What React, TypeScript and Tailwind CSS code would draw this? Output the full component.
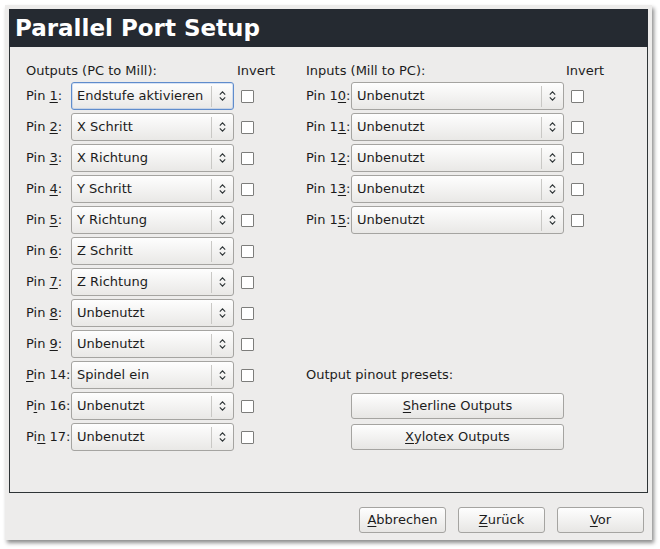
import React from "react";

// ── Parallel Port Setup (GTK-style wizard page) ──

const font = { fontFamily: '"DejaVu Sans", "Liberation Sans", sans-serif' };

function Mnemonic({ text, idx }: { text: string; idx: number }) {
  return (
    <>
      {text.slice(0, idx)}
      <span className="underline underline-offset-2 decoration-1">{text[idx]}</span>
      {text.slice(idx + 1)}
    </>
  );
}

function Arrows() {
  return (
    <svg width="7" height="12" viewBox="0 0 7 12" fill="none" stroke="#2e3436" strokeWidth="1.1">
      <polyline points="0.8,4.6 3.5,1.8 6.2,4.6" />
      <polyline points="0.8,7.4 3.5,10.2 6.2,7.4" />
    </svg>
  );
}

function Combo({ value, width, focused }: { value: string; width: string; focused?: boolean }) {
  return (
    <div
      className={`${width} h-[28px] flex items-center rounded-[3px] border bg-gradient-to-b from-[#fefefe] to-[#e9e8e6] flex-shrink-0 ${
        focused ? "border-[#5f8ccc] shadow-[inset_0_0_0_1px_rgba(140,175,225,0.35)]" : "border-[#a5a4a1]"
      }`}
    >
      <span className="flex-1 pl-[5px] text-[13px] text-[#1c1c1c] truncate">{value}</span>
      <div className="w-px h-[21px] bg-[#c9c8c5]" />
      <div className="w-[21px] flex items-center justify-center">
        <Arrows />
      </div>
    </div>
  );
}

function Check() {
  return <div className="w-[13px] h-[13px] border border-[#7d7d7b] bg-white rounded-[1px] flex-shrink-0" />;
}

function PinRow({
  label,
  idx,
  value,
  width,
  focused,
}: {
  label: string;
  idx: number;
  value: string;
  width: string;
  focused?: boolean;
}) {
  return (
    <div className="h-[28px] flex items-center">
      <span className="w-[45px] text-[13px] text-[#1c1c1c] whitespace-nowrap">
        <Mnemonic text={label} idx={idx} />
      </span>
      <Combo value={value} width={width} focused={focused} />
      <div className="ml-[7px]">
        <Check />
      </div>
    </div>
  );
}

function Button({ text, idx, width }: { text: string; idx: number; width: string }) {
  return (
    <div
      className={`${width} h-[26px] flex items-center justify-center rounded-[3px] border border-[#a5a4a1] bg-gradient-to-b from-[#fefefe] to-[#e7e6e4] text-[13px] text-[#1c1c1c]`}
    >
      <span>
        <Mnemonic text={text} idx={idx} />
      </span>
    </div>
  );
}

const outputs = [
  ["Pin 1:", 4, "Endstufe aktivieren"],
  ["Pin 2:", 4, "X Schritt"],
  ["Pin 3:", 4, "X Richtung"],
  ["Pin 4:", 4, "Y Schritt"],
  ["Pin 5:", 4, "Y Richtung"],
  ["Pin 6:", 4, "Z Schritt"],
  ["Pin 7:", 4, "Z Richtung"],
  ["Pin 8:", 4, "Unbenutzt"],
  ["Pin 9:", 4, "Unbenutzt"],
  ["Pin 14:", 0, "Spindel ein"],
  ["Pin 16:", 1, "Unbenutzt"],
  ["Pin 17:", 2, "Unbenutzt"],
] as const;

const inputs = [
  ["Pin 10:", 5, "Unbenutzt"],
  ["Pin 11:", 5, "Unbenutzt"],
  ["Pin 12:", 5, "Unbenutzt"],
  ["Pin 13:", 5, "Unbenutzt"],
  ["Pin 15:", 5, "Unbenutzt"],
] as const;

export default function App() {
  return (
    <div className="w-[660px] h-[549px] bg-white pt-[5px] pl-[5px]" style={font}>
      <div className="w-[647px] h-[535px] bg-[#edeceb] px-[4px] pt-[4px] flex flex-col shadow-[2px_3px_4px_rgba(0,0,0,0.45)]">
        {/* Title */}
        <div className="h-[38px] bg-[#252a31] flex items-center pl-[6px] pt-[1px]">
          <span className="text-[23px] font-bold text-white leading-none">Parallel Port Setup</span>
        </div>

        {/* Content */}
        <div className="h-[446px] border border-t-0 border-[#2e3436] pl-[16px] pt-[15px] flex">
          {/* Outputs */}
          <div className="w-[280px] flex flex-col gap-[3px]">
            <div className="h-[17px] flex items-center text-[13px] text-[#1c1c1c]">
              <span className="w-[211px]">Outputs (PC to Mill):</span>
              <span>Invert</span>
            </div>
            {outputs.map(([l, i, v], n) => (
              <PinRow key={l} label={l} idx={i} value={v} width="w-[163px]" focused={n === 0} />
            ))}
          </div>

          {/* Inputs */}
          <div className="flex flex-col gap-[3px]">
            <div className="h-[17px] flex items-center text-[13px] text-[#1c1c1c]">
              <span className="w-[260px]">Inputs (Mill to PC):</span>
              <span>Invert</span>
            </div>
            {inputs.map(([l, i, v]) => (
              <PinRow key={l} label={l} idx={i} value={v} width="w-[213px]" />
            ))}
            <div className="h-[28px]" />
            <div className="h-[28px]" />
            <div className="h-[28px]" />
            <div className="h-[28px]" />
            <div className="h-[28px] flex items-center text-[13px] text-[#1c1c1c]">Output pinout presets:</div>
            <div className="flex flex-col gap-[5px] pl-[45px] pt-[1px]">
              <Button text="Sherline Outputs" idx={0} width="w-[213px]" />
              <Button text="Xylotex Outputs" idx={0} width="w-[213px]" />
            </div>
          </div>
        </div>

        {/* Footer */}
        <div className="flex justify-end items-start pt-[14px] pr-[4px]">
          <Button text="Abbrechen" idx={0} width="w-[87px]" />
          <div className="ml-[12px]">
            <Button text="Zurück" idx={0} width="w-[87px]" />
          </div>
          <div className="ml-[12px]">
            <Button text="Vor" idx={0} width="w-[87px]" />
          </div>
        </div>
      </div>
    </div>
  );
}
